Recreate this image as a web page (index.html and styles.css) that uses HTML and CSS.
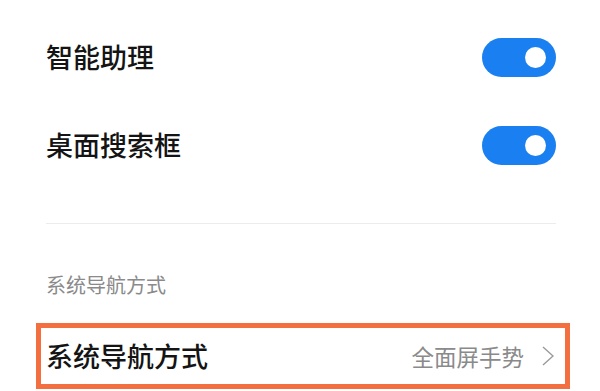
FILE: index.html
```html
<!DOCTYPE html>
<html lang="zh-CN">
<head>
<meta charset="utf-8">
<link rel="stylesheet" href="styles.css">
</head>
<body>
<div class="page">
  <div class="row">
    <span class="label">智能助理</span>
    <span class="toggle"><span class="knob"></span></span>
  </div>
  <div class="row">
    <span class="label">桌面搜索框</span>
    <span class="toggle"><span class="knob"></span></span>
  </div>
  <div class="divider"></div>
  <div class="section-title">系统导航方式</div>
  <div class="nav-row">
    <span class="label">系统导航方式</span>
    <span class="value">全面屏手势
      <svg class="chev" width="12" height="20" viewBox="0 0 12 20"><polyline points="1,1 11,10 1,19" fill="none" stroke="#9a9a9a" stroke-width="1.4"/></svg>
    </span>
  </div>
</div>
</body>
</html>
```
FILE: styles.css
```css
html, body {
  margin: 0;
  padding: 0;
  background: #ffffff;
}
body {
  font-family: "Noto Sans CJK SC", "Noto Sans", sans-serif;
  color: #141414;
}
.page {
  padding: 13px 44px 0 46px;
}
.row {
  height: 88px;
  display: flex;
  align-items: center;
  justify-content: space-between;
}
.label {
  font-size: 27px;
  line-height: 32px;
  font-weight: 500;
}
.toggle {
  width: 74px;
  height: 39px;
  border-radius: 20px;
  background: #1a7ff0;
  display: flex;
  align-items: center;
  justify-content: flex-end;
  padding-right: 10px;
  box-sizing: border-box;
}
.knob {
  width: 21px;
  height: 21px;
  border-radius: 50%;
  background: #ffffff;
}
.divider {
  margin-top: 34px;
  height: 1px;
  background: #ececec;
}
.section-title {
  margin-top: 49px;
  font-size: 20px;
  line-height: 24px;
  color: #8a8a8a;
}
.nav-row {
  margin: 26px -14px 0 -10px;
  height: 66px;
  border: 5px solid #f46f3f;
  box-sizing: border-box;
  display: flex;
  align-items: center;
  justify-content: space-between;
  padding: 0 11px 0 5px;
}
.value {
  display: flex;
  align-items: center;
  gap: 18px;
  font-size: 22.5px;
  color: #8a8a8a;
}
.chev {
  display: block;
}
```
